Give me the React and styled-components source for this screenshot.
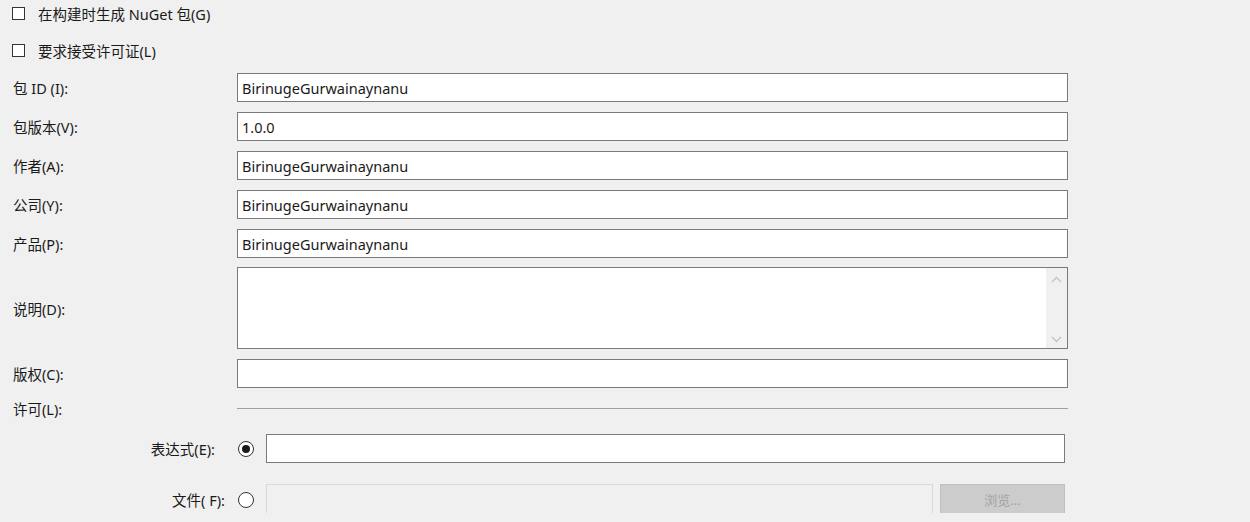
import React from 'react'
import styled, {createGlobalStyle} from 'styled-components'

const Global = createGlobalStyle`
    html, body {
        margin: 0;
        padding: 0;
        background: #f0f0f0;
    }
    body {
        font-family: "Noto Sans", "Noto Sans CJK SC", sans-serif;
        font-size: 14.5px;
        color: #1a1a1a;
    }
`

const Page = styled.div`
    width: 1068px;
    padding-left: 12px;
    box-sizing: border-box;
    display: flex;
    flex-direction: column;
`

const CheckRow = styled.label`
    display: flex;
    align-items: center;
    gap: 13px;
    height: 26px;
    margin-bottom: ${p => p.$mb || 0}px;
`

const Box = styled.span`
    width: 11px;
    height: 11px;
    border: 1px solid #333;
    background: #fff;
`

const Row = styled.div`
    display: grid;
    grid-template-columns: 225px 1fr;
    align-items: center;
    height: ${p => p.$h || 29}px;
    margin-bottom: ${p => p.$mb ?? 10}px;
`

const Label = styled.span`
    padding-left: 1px;
`

const Field = styled.div`
    height: 100%;
    box-sizing: border-box;
    border: 1px solid #7a7a7a;
    background: ${p => p.$disabled ? '#f0f0f0' : '#fff'};
    border-color: ${p => p.$disabled ? '#d9d9d9' : '#7a7a7a'};
    display: flex;
    align-items: center;
    padding-left: 4px;
`

const Memo = styled(Field)`
    padding: 0;
    align-items: stretch;
    justify-content: flex-end;
`

const Scroll = styled.div`
    width: 21px;
    background: #f0f0f0;
    display: flex;
    flex-direction: column;
    justify-content: space-between;
    align-items: center;
    padding: 8px 0 5px;
`

const Rule = styled.div`
    height: 1px;
    background: #a0a0a0;
`

const LicRow = styled.div`
    display: grid;
    grid-template-columns: 225px 29px 1fr;
    align-items: center;
    height: 29px;
    margin-right: 3px;
    margin-bottom: ${p => p.$mb || 0}px;
`

const SubLabel = styled.span`
    text-align: right;
    padding-right: ${p => p.$pr}px;
`

const Radio = styled.span`
    width: 14px;
    height: 14px;
    border-radius: 50%;
    border: 1.5px solid #333;
    background: #fff;
    display: flex;
    align-items: center;
    justify-content: center;
    margin-left: 1px;

    &::after {
        content: '';
        width: 8px;
        height: 8px;
        border-radius: 50%;
        background: ${p => p.$on ? '#1a1a1a' : 'transparent'};
    }
`

const FileWrap = styled.div`
    display: flex;
    gap: 7px;
    height: 100%;
    align-items: center;
`

const Browse = styled.div`
    width: 125px;
    height: 31px;
    box-sizing: border-box;
    background: #cccccc;
    border: 1px solid #bfbfbf;
    color: #a3a3a3;
    display: flex;
    align-items: center;
    justify-content: center;
    font-size: 13px;
`

const Chevron = ({up}) => (
    <svg width="11" height="7" viewBox="0 0 11 7">
        <path d={up ? 'M1 6 L5.5 1.5 L10 6' : 'M1 1 L5.5 5.5 L10 1'} fill="none" stroke="#c2c2c2" strokeWidth="1.3" />
    </svg>
)

const fields = [
    ['包 ID (I):', 'BirinugeGurwainaynanu'],
    ['包版本(V):', '1.0.0'],
    ['作者(A):', 'BirinugeGurwainaynanu'],
    ['公司(Y):', 'BirinugeGurwainaynanu'],
    ['产品(P):', 'BirinugeGurwainaynanu'],
]

const App = () => {
    return (
        <Page>
            <Global />
            <CheckRow $mb={11}><Box />在构建时生成 NuGet 包(G)</CheckRow>
            <CheckRow $mb={10}><Box />要求接受许可证(L)</CheckRow>
            {fields.map(([label, value], i) => (
                <Row key={label} $mb={i === 4 ? 9 : 10}>
                    <Label>{label}</Label>
                    <Field>{value}</Field>
                </Row>
            ))}
            <Row $h={82}>
                <Label>说明(D):</Label>
                <Memo>
                    <Scroll>
                        <Chevron up />
                        <Chevron />
                    </Scroll>
                </Memo>
            </Row>
            <Row $mb={5}>
                <Label>版权(C):</Label>
                <Field />
            </Row>
            <Row $h={30} $mb={11}>
                <Label>许可(L):</Label>
                <Rule />
            </Row>
            <LicRow $mb={21}>
                <SubLabel $pr={22}>表达式(E):</SubLabel>
                <Radio $on />
                <Field />
            </LicRow>
            <LicRow>
                <SubLabel $pr={12}>文件( F):</SubLabel>
                <Radio />
                <FileWrap>
                    <Field $disabled style={{flex: 1}} />
                    <Browse>浏览...</Browse>
                </FileWrap>
            </LicRow>
        </Page>
    )
}

export default App
